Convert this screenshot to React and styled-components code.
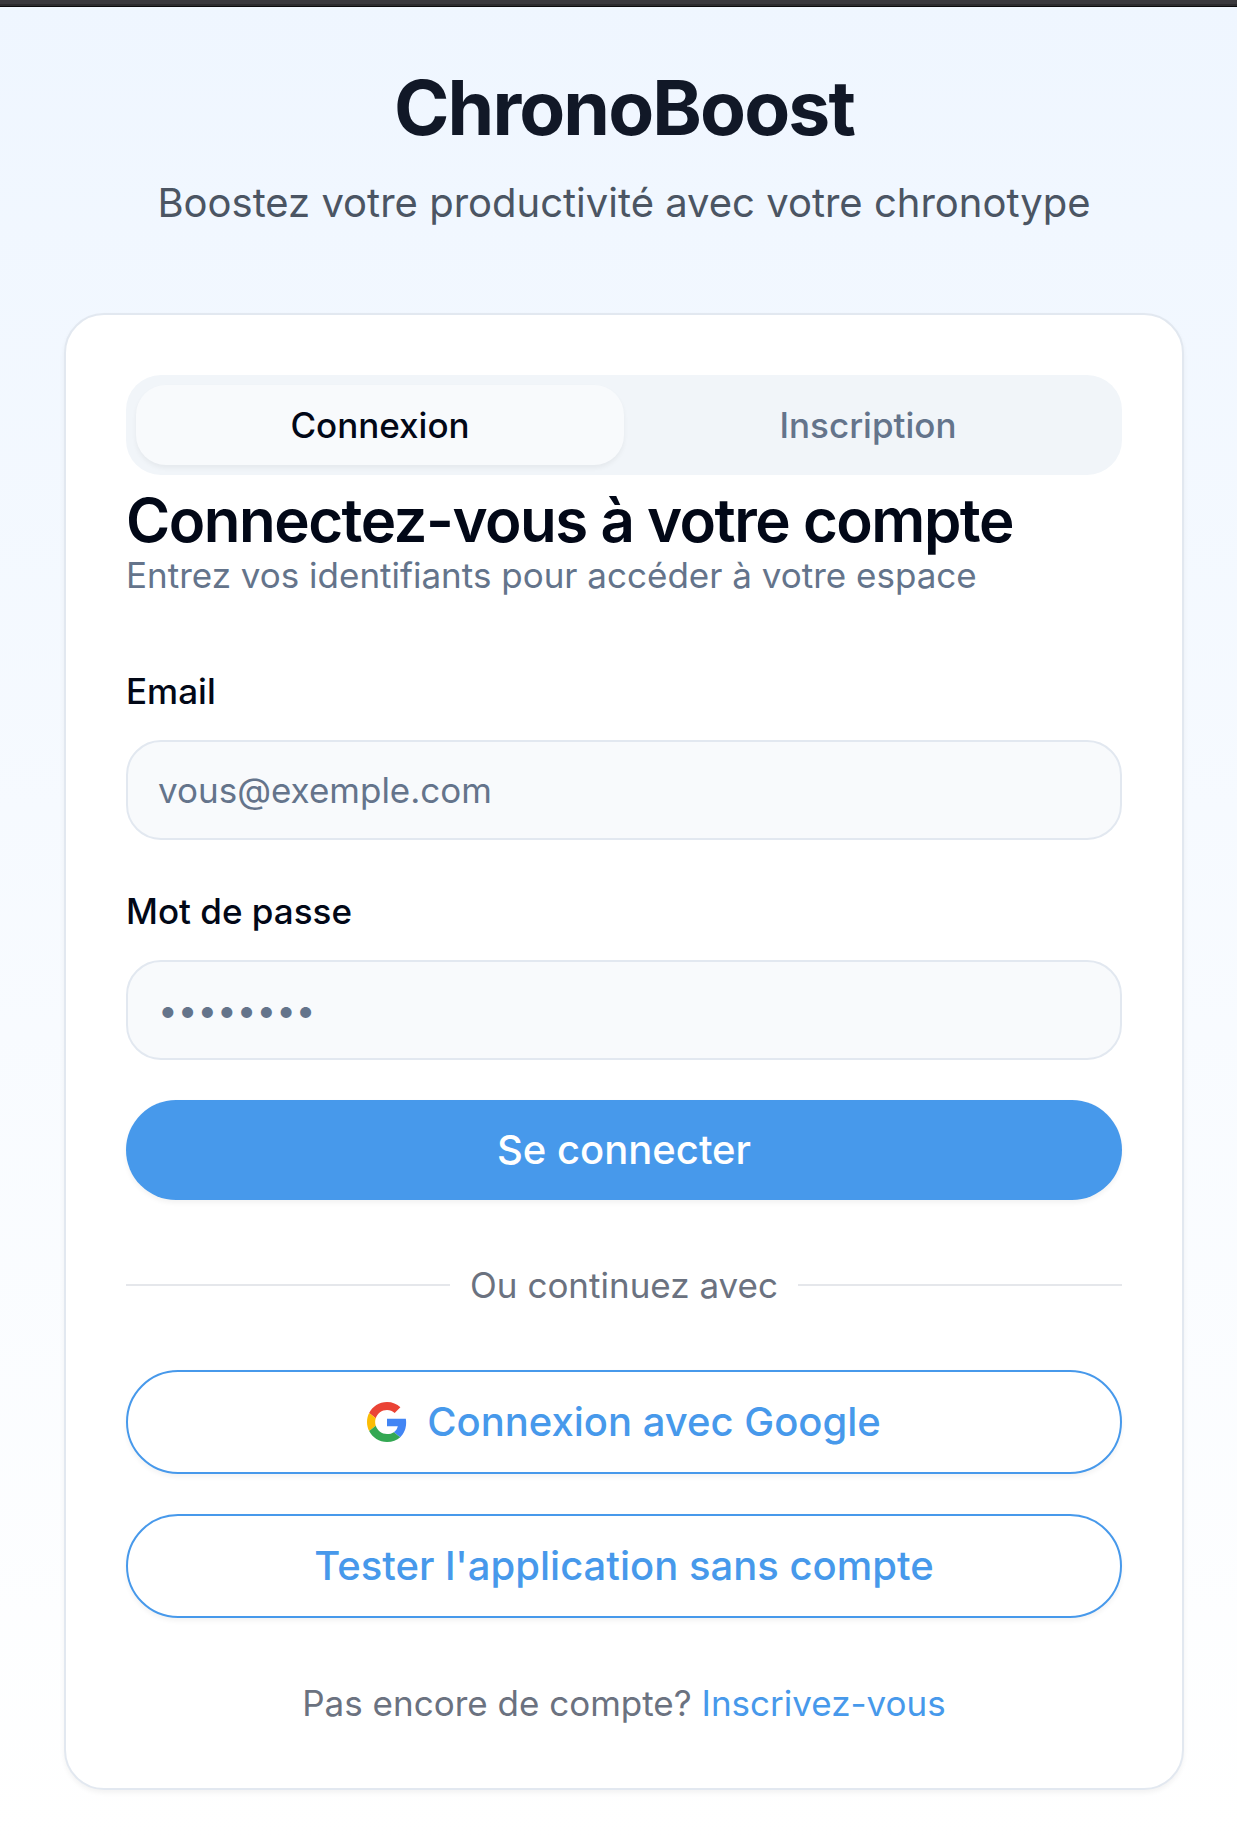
import React, { useState } from 'react'
import styled, { createGlobalStyle } from 'styled-components'

const GlobalStyle = createGlobalStyle`
  * {
    box-sizing: border-box;
    margin: 0;
    padding: 0;
  }
  body {
    font-family: "Inter", "Liberation Sans", sans-serif;
    font-size: 40px;
    line-height: 60px;
    color: #020817;
    background: #fff;
  }
  button, input {
    font-family: inherit;
  }
`

const Page = styled.div`
  min-height: 100vh;
  display: flex;
  flex-direction: column;
  background: linear-gradient(to bottom, #eff6ff, #ffffff);
`

const TopBar = styled.div`
  height: 7px;
  background: #3a393e;
  border-bottom: 1px solid #0c0c0e;
  box-shadow: inset 0 -2px 0 #2c2b2f;
`

const Main = styled.main`
  padding: 56px 53px 40px 64px;
`

const Content = styled.div`
  max-width: 1120px;
  margin: 0 auto;
`

const Header = styled.header`
  text-align: center;
  margin-bottom: 80px;

  h1 {
    font-size: 75px;
    line-height: 90px;
    font-weight: 700;
    letter-spacing: -0.025em;
    color: #111827;
    margin-bottom: 20px;
  }
  p {
    color: #4b5563;
  }
`

const Card = styled.section`
  background: #fff;
  border: 2px solid #e2e8f0;
  border-radius: 40px;
  padding: 60px;
  box-shadow: 0 3px 5px rgba(0, 0, 0, 0.05);
`

const Tabs = styled.div`
  display: grid;
  grid-template-columns: repeat(2, 1fr);
  padding: 10px;
  margin-bottom: 15px;
  border-radius: 35px;
  background: #f1f5f9;
`

const Tab = styled.button`
  border: none;
  border-radius: 30px;
  padding: 15px 30px;
  font-size: 35px;
  line-height: 50px;
  font-weight: 500;
  cursor: pointer;
  color: ${(props) => (props.$active ? '#020817' : '#64748b')};
  background: ${(props) => (props.$active ? '#f8fafc' : 'transparent')};
  box-shadow: ${(props) => (props.$active ? '0 3px 5px rgba(0, 0, 0, 0.05)' : 'none')};
`

const Intro = styled.div`
  margin-bottom: 60px;

  h2 {
    font-size: 60px;
    line-height: 60px;
    font-weight: 600;
    letter-spacing: -0.025em;
  }
  p {
    font-size: 35px;
    line-height: 50px;
    color: #64748b;
  }
`

const Form = styled.form`
  display: flex;
  flex-direction: column;
  gap: 40px;
`

const Field = styled.div`
  label {
    font-size: 35px;
    line-height: 35px;
    font-weight: 500;
  }
`

const Input = styled.input`
  display: block;
  width: 100%;
  height: 100px;
  margin-top: 20px;
  padding: 0 30px;
  border: 2px solid #e2e8f0;
  border-radius: 35px;
  background: #f8fafc;
  color: #020817;
  font-size: 35px;
  line-height: 50px;

  &::placeholder {
    color: #64748b;
    opacity: 1;
  }
`

const Button = styled.button`
  display: flex;
  align-items: center;
  justify-content: center;
  gap: 20px;
  width: 100%;
  padding: 20px 40px;
  border: ${(props) => (props.$outline ? '2px solid #4799eb' : 'none')};
  border-radius: 52px;
  background: ${(props) => (props.$outline ? '#fff' : '#4799eb')};
  color: ${(props) => (props.$outline ? '#4799eb' : '#fff')};
  font-size: 40px;
  line-height: 60px;
  font-weight: 500;
  cursor: pointer;
  box-shadow: 0 3px 5px rgba(0, 0, 0, 0.05);
`

const Divider = styled.div`
  display: flex;
  align-items: center;
  gap: 20px;
  margin: 60px 0;
  font-size: 35px;
  line-height: 50px;
  color: #6b7280;

  &::before,
  &::after {
    content: "";
    flex: 1;
    height: 2px;
    background: #e5e7eb;
  }
`

const Actions = styled.div`
  display: flex;
  flex-direction: column;
  gap: 40px;
`

const Footer = styled.p`
  margin-top: 60px;
  text-align: center;
  font-size: 35px;
  line-height: 50px;
  color: #6b7280;

  a {
    color: #4799eb;
    text-decoration: none;
  }
`

const GoogleIcon = () => (
  <svg width="40" height="40" viewBox="0 0 48 48" aria-hidden="true">
    <path fill="#EA4335" d="M24 9.5c3.54 0 6.71 1.22 9.21 3.6l6.85-6.85C35.9 2.38 30.47 0 24 0 14.62 0 6.51 5.38 2.56 13.22l7.98 6.19C12.43 13.72 17.74 9.5 24 9.5z" />
    <path fill="#4285F4" d="M46.98 24.55c0-1.57-.15-3.09-.38-4.55H24v9.02h12.94c-.58 2.96-2.26 5.48-4.78 7.18l7.73 6c4.51-4.18 7.09-10.36 7.09-17.65z" />
    <path fill="#FBBC05" d="M10.53 28.59c-.48-1.45-.76-2.99-.76-4.59s.27-3.14.76-4.59l-7.98-6.19C.92 16.46 0 20.12 0 24c0 3.88.92 7.54 2.56 10.78l7.97-6.19z" />
    <path fill="#34A853" d="M24 48c6.48 0 11.93-2.13 15.89-5.81l-7.73-6c-2.15 1.45-4.92 2.3-8.16 2.3-6.26 0-11.57-4.22-13.47-9.91l-7.98 6.19C6.51 42.62 14.62 48 24 48z" />
  </svg>
)

const App = () => {
  const [tab, setTab] = useState('login')

  return (
    <>
      <GlobalStyle />
      <Page>
        <TopBar />
        <Main>
          <Content>
            <Header>
              <h1>ChronoBoost</h1>
              <p>Boostez votre productivité avec votre chronotype</p>
            </Header>
            <Card>
              <Tabs role="tablist">
                <Tab type="button" role="tab" aria-selected={tab === 'login'} $active={tab === 'login'} onClick={() => setTab('login')}>
                  Connexion
                </Tab>
                <Tab type="button" role="tab" aria-selected={tab === 'signup'} $active={tab === 'signup'} onClick={() => setTab('signup')}>
                  Inscription
                </Tab>
              </Tabs>
              <Intro>
                <h2>Connectez-vous à votre compte</h2>
                <p>Entrez vos identifiants pour accéder à votre espace</p>
              </Intro>
              <Form onSubmit={(e) => e.preventDefault()}>
                <Field>
                  <label htmlFor="email">Email</label>
                  <Input id="email" type="email" placeholder="vous@exemple.com" />
                </Field>
                <Field>
                  <label htmlFor="password">Mot de passe</label>
                  <Input id="password" type="password" placeholder="••••••••" />
                </Field>
                <Button type="submit">Se connecter</Button>
              </Form>
              <Divider>Ou continuez avec</Divider>
              <Actions>
                <Button type="button" $outline>
                  <GoogleIcon />
                  Connexion avec Google
                </Button>
                <Button type="button" $outline>
                  Tester l'application sans compte
                </Button>
              </Actions>
              <Footer>
                Pas encore de compte? <a href="#inscription">Inscrivez-vous</a>
              </Footer>
            </Card>
          </Content>
        </Main>
      </Page>
    </>
  )
}

export default App
